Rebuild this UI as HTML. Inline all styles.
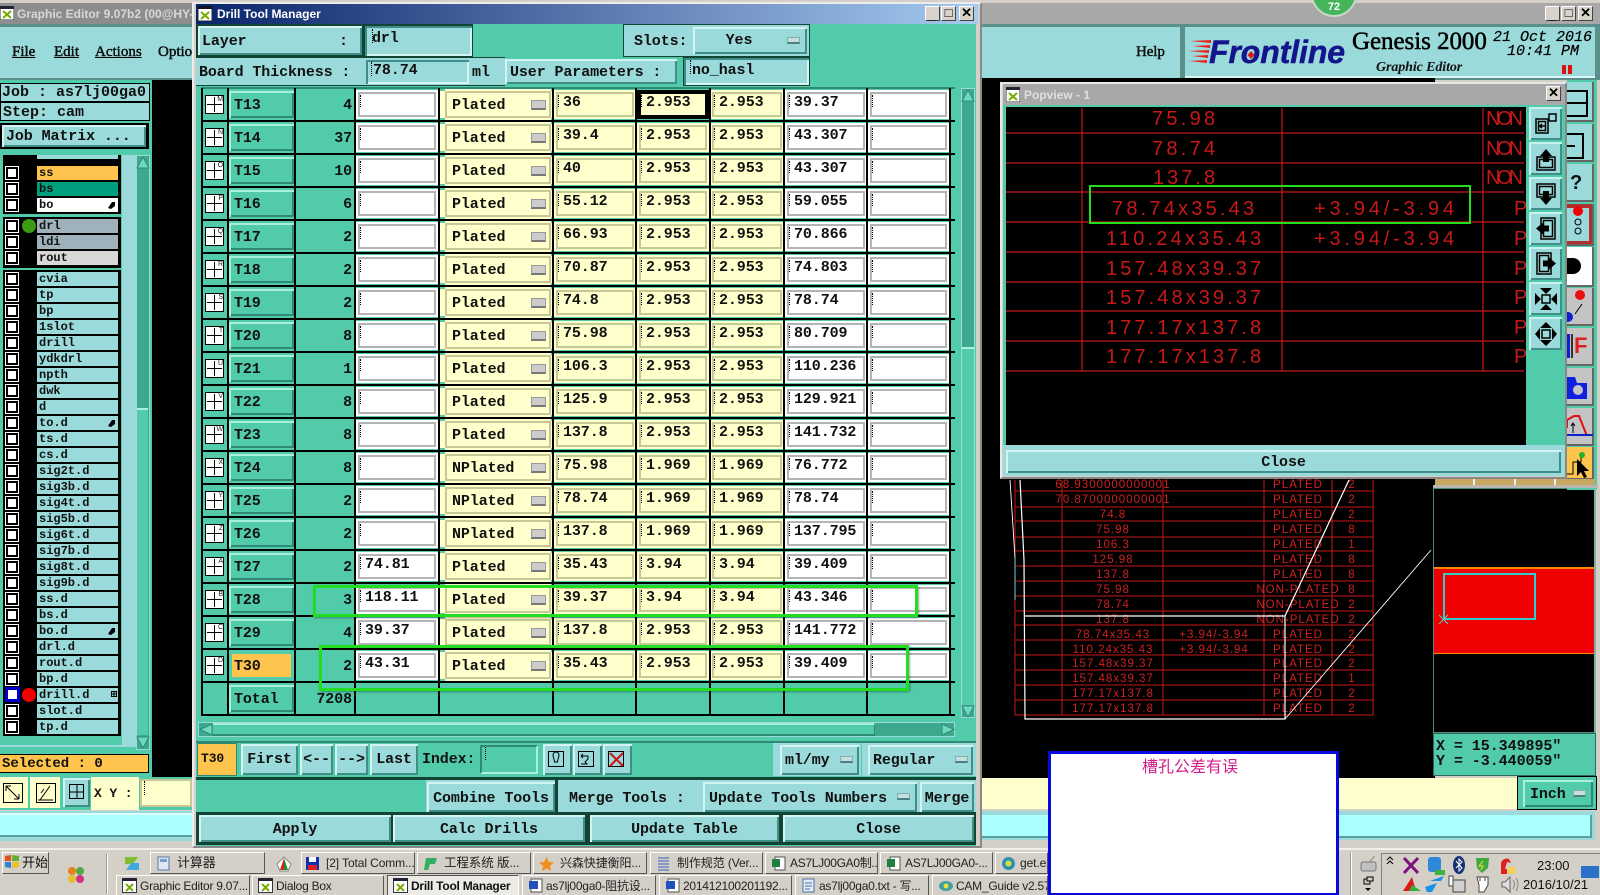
<!DOCTYPE html>
<html><head><meta charset="utf-8"><title>Drill Tool Manager</title>
<style>
html,body{margin:0;padding:0;width:1600px;height:895px;overflow:hidden;background:#d4d0c8}
body *{position:absolute;box-sizing:border-box;white-space:nowrap}
body{font:bold 15px "Liberation Mono","Noto Sans CJK SC",monospace;color:#111;letter-spacing:-.1px}
svg text{white-space:pre}
.bv{background:#9bdada;box-shadow:inset 2px 2px 0 #d4f3f3,inset -2px -2px 0 #3f8f88;text-align:center}
.bt{background:#52cbaa;box-shadow:inset 2px 2px 0 #a8f0dc,inset -2px -2px 0 #2e8a74}
.r{left:0;width:980px;height:33px}
.pl{left:205px;top:7px;width:19px;height:19px;background:#fff;border:1px solid #000;font:7px/7px "Liberation Sans",sans-serif;text-align:right;color:#222;padding-right:0}
.pl::before{content:"";position:absolute;left:1px;top:8px;width:15px;height:1px;background:#000}
.pl::after{content:"";position:absolute;left:8px;top:1px;width:1px;height:15px;background:#000}
.tb{left:229px;top:3px;width:65px;height:27px;padding-left:5px;line-height:30px}
.tb.or{background:#ffc44d;box-shadow:none;left:232px;width:59px;top:5px;height:23px;line-height:26px;padding-left:2px}
.ct{left:296px;width:56px;top:0;line-height:35px;text-align:right}
.f{top:4px;height:25px;border:2px solid;outline:2px solid;line-height:17px;padding-left:5px}
.f::before{content:"";position:absolute;left:0;top:1px;height:12px;border-left:1px dotted #000}
.w{background:#fff;border-color:#b4b4b4;outline-color:#fff}
.y{background:#ffffcc;border-color:#c8c896;outline-color:#ffffcc}
.c4{left:358px;width:78px}.c6{left:556px;width:78px}.c7{left:639px;width:68px}.c8{left:712px;width:70px}.c9{left:787px;width:78px}.c10{left:870px;width:77px}
.pb{left:445px;top:3px;width:106px;height:27px;background:#ffffcc;border:2px solid #c8c896;box-shadow:-6px 0 0 #ffffcc,0 -3px 0 #ffffcc,0 3px 0 #ffffcc,2px 0 0 #ffffcc;padding-left:5px;line-height:25px}
.pb::after{content:"";position:absolute;left:84px;top:7px;width:13px;height:7px;background:#ccc;border:1px solid #999;border-bottom:2px solid #777}
.h{left:201px;width:754px;height:2px;background:#000}
.v{top:88px;width:2px;height:626px;background:#000}
.dd{width:13px;height:7px;background:#c6dede;border:1px solid #7fb0b0;border-bottom:2px solid #4c7f7f}
.ll{left:37px;width:81px;height:14px;background:#9bdada;font-size:12px;line-height:15px;padding-left:2px;letter-spacing:0}
.ck{left:6px;width:12px;height:12px;background:#fff;border:2px solid #000;outline:1px solid #fff}
.mn{top:44px;font:15px "Liberation Serif",serif;-webkit-text-stroke:.4px #000;letter-spacing:0;text-decoration:underline;text-decoration-thickness:1px}
.win{background:#d8d4cc;border:1px solid #fff;border-right-color:#444;border-bottom-color:#444;width:15px;height:15px;font:bold 13px/12px "Liberation Sans",sans-serif;text-align:center;color:#000}
.tk{height:22px;background:#d4d0c8;border:1px solid #fff;border-right-color:#555;border-bottom-color:#555;font:12px/20px "Liberation Sans","Noto Sans CJK SC",sans-serif;color:#222;padding-left:26px;letter-spacing:-.1px;font-weight:normal;overflow:hidden}
.t2{top:875px;height:20px;padding-left:23px;line-height:21px;border-bottom:0;letter-spacing:-.25px}
.ti{left:5px;top:3px;width:15px;height:15px}
.t2 .ti{top:2px}
.pt{left:1529px;width:33px;height:33px;background:#9bdada;box-shadow:inset 2px 2px 0 #c8f0ee,inset -2px -2px 0 #3f8f88}
.rt{left:1567px;width:27px;background:#c4c4c4;box-shadow:inset -2px -2px 0 #666}
</style></head><body>

<!-- back window -->
<div style="left:0;top:0;width:1600px;height:848px;background:#d4d0c8"></div>
<div style="left:0;top:3px;width:1600px;height:21px;background:#a8a8a8"></div>
<div style="left:0;top:3px;width:192px;height:21px;background:#8d8d8d"></div>
<svg style="left:0;top:6px" width="14" height="14"><rect width="14" height="14" fill="#fff" stroke="#333"/><rect width="14" height="3" fill="#223"/><path d="M3 5l8 7M11 5l-8 7" stroke="#7a0" stroke-width="2"/></svg>
<div style="left:17px;top:5px;font:bold 12px/18px 'Liberation Sans',sans-serif;color:#d8d8d8;letter-spacing:0">Graphic Editor 9.07b2 (00@HY-I</div>
<div style="left:0;top:24px;width:1600px;height:56px;background:#5a8f8a"></div>
<div style="left:0;top:27px;width:192px;height:51px;background:#9bdada"></div>
<div class="mn" style="left:12px">File</div><div class="mn" style="left:54px">Edit</div><div class="mn" style="left:95px">Actions</div><div class="mn" style="left:158px;width:34px;overflow:hidden;text-decoration:none">Optio</div>
<div style="left:980px;top:27px;width:200px;height:51px;background:#9bdada"></div>
<div style="left:1136px;top:42px;font:15px/20px 'Liberation Serif',serif;-webkit-text-stroke:.4px #000">Help</div>
<div style="left:1185px;top:27px;width:410px;height:51px;background:#9bdada;border-bottom:2px solid #d8f6f6"></div>
<svg style="left:1188px;top:38px" width="30" height="28"><path d="M2 3L23 2V5zM5 8L22 7V10zM1 13L21 12V15zM4 18L20 17V20zM1 23L19 22V25z" fill="#ee2020"/></svg>
<div style="left:1209px;top:30px;font:italic bold 32px/44px 'Liberation Sans',sans-serif;color:#14148c;letter-spacing:-.1px;-webkit-text-stroke:.5px #14148c">Frontline</div>
<svg style="left:1243px;top:47px" width="16" height="16"><path d="M8 4l3.500 4-3.500 4-3.500-4z" fill="#e01818"/></svg>
<div style="left:1352px;top:26px;font:25px/32px 'Liberation Serif',serif;-webkit-text-stroke:.5px #000;color:#000;letter-spacing:-.05px">Genesis 2000</div>
<div style="left:1376px;top:59px;font:italic bold 14px/18px 'Liberation Serif',serif;color:#111">Graphic Editor</div>
<div style="left:1493px;top:29px;font:italic 15px/18px 'Liberation Mono',monospace;color:#000;-webkit-text-stroke:.2px #000;letter-spacing:0">21 Oct 2016</div>
<div style="left:1507px;top:43px;font:italic 15px/18px 'Liberation Mono',monospace;color:#000;-webkit-text-stroke:.2px #000;letter-spacing:0">10:41 PM</div>
<div style="left:1562px;top:65px;width:4px;height:9px;background:#e01010"></div><div style="left:1568px;top:65px;width:4px;height:9px;background:#e01010"></div>
<div class="win" style="left:1545px;top:6px;line-height:16px">_</div><div class="win" style="left:1561px;top:6px;line-height:12px">□</div><div class="win" style="left:1578px;top:6px">✕</div>
<div style="left:1311px;top:-29px;width:46px;height:46px;border-radius:50%;background:#46b45a;border:2px solid #c8d8c8;color:#fff;font:bold 11px/12px 'Liberation Sans',sans-serif;text-align:center;padding-top:28px;letter-spacing:0">72</div>

<!-- left panel -->
<div style="left:0;top:80px;width:152px;height:697px;background:#52cbaa"></div>
<div style="left:152px;top:80px;width:40px;height:697px;background:#000"></div>
<div style="left:0;top:83px;width:150px;height:38px;background:#000"></div>
<div style="left:1px;top:84px;width:148px;height:17px;background:#9bdada;line-height:17px;padding-left:1px;letter-spacing:0">Job : as7lj00ga0</div>
<div style="left:1px;top:103px;width:148px;height:17px;background:#9bdada;line-height:19px;padding-left:2px;letter-spacing:0">Step: cam</div>
<div style="left:0;top:123px;width:149px;height:26px;background:#000"></div>
<div class="bv" style="left:2px;top:125px;width:144px;height:22px;line-height:23px;text-align:left;padding-left:4px">Job Matrix ...</div>
<!-- layer list -->
<div style="left:0;top:155px;width:125px;height:592px;background:#9bdada"></div>
<div style="left:0;top:155px;width:122px;height:590px;background:#52cbaa"></div>
<div style="left:3px;top:155px;width:118px;height:59px;background:#000"></div>
<div style="left:3px;top:217px;width:118px;height:51px;background:#000"></div>
<div style="left:3px;top:270px;width:118px;height:466px;background:#000"></div>
<div class="ll" style="top:155px;height:4px"></div>
<div class="ck" style="top:167px"></div><div class="ll" style="top:166px;background:#ffc44d">ss</div>
<div class="ck" style="top:183px"></div><div class="ll" style="top:182px;background:#00a07e">bs</div>
<div class="ck" style="top:199px"></div><div class="ll" style="top:198px;background:#fff">bo<svg style="left:71px;top:3px" width="8" height="8"><path d="M0 7L4 1H7V5L3 8z" fill="#000"/></svg></div>
<div class="ck" style="top:220px"></div><div style="left:22px;top:219px;width:14px;height:14px;border-radius:50%;background:#3c9a14"></div><div class="ll" style="top:219px;background:#9fb2bb">drl</div>
<div class="ck" style="top:236px"></div><div class="ll" style="top:235px;background:#9fb2bb">ldi</div>
<div class="ck" style="top:252px"></div><div class="ll" style="top:251px;background:#d8d8d8">rout</div>
<div class="ck" style="top:273px"></div><div class="ll" style="top:272px">cvia</div>
<div class="ck" style="top:289px"></div><div class="ll" style="top:288px">tp</div>
<div class="ck" style="top:305px"></div><div class="ll" style="top:304px">bp</div>
<div class="ck" style="top:321px"></div><div class="ll" style="top:320px">1slot</div>
<div class="ck" style="top:337px"></div><div class="ll" style="top:336px">drill</div>
<div class="ck" style="top:353px"></div><div class="ll" style="top:352px">ydkdrl</div>
<div class="ck" style="top:369px"></div><div class="ll" style="top:368px">npth</div>
<div class="ck" style="top:385px"></div><div class="ll" style="top:384px">dwk</div>
<div class="ck" style="top:401px"></div><div class="ll" style="top:400px">d</div>
<div class="ck" style="top:417px"></div><div class="ll" style="top:416px">to.d<svg style="left:71px;top:3px" width="8" height="8"><path d="M0 7L4 1H7V5L3 8z" fill="#000"/></svg></div>
<div class="ck" style="top:433px"></div><div class="ll" style="top:432px">ts.d</div>
<div class="ck" style="top:449px"></div><div class="ll" style="top:448px">cs.d</div>
<div class="ck" style="top:465px"></div><div class="ll" style="top:464px">sig2t.d</div>
<div class="ck" style="top:481px"></div><div class="ll" style="top:480px">sig3b.d</div>
<div class="ck" style="top:497px"></div><div class="ll" style="top:496px">sig4t.d</div>
<div class="ck" style="top:513px"></div><div class="ll" style="top:512px">sig5b.d</div>
<div class="ck" style="top:529px"></div><div class="ll" style="top:528px">sig6t.d</div>
<div class="ck" style="top:545px"></div><div class="ll" style="top:544px">sig7b.d</div>
<div class="ck" style="top:561px"></div><div class="ll" style="top:560px">sig8t.d</div>
<div class="ck" style="top:577px"></div><div class="ll" style="top:576px">sig9b.d</div>
<div class="ck" style="top:593px"></div><div class="ll" style="top:592px">ss.d</div>
<div class="ck" style="top:609px"></div><div class="ll" style="top:608px">bs.d</div>
<div class="ck" style="top:625px"></div><div class="ll" style="top:624px">bo.d<svg style="left:71px;top:3px" width="8" height="8"><path d="M0 7L4 1H7V5L3 8z" fill="#000"/></svg></div>
<div class="ck" style="top:641px"></div><div class="ll" style="top:640px">drl.d</div>
<div class="ck" style="top:657px"></div><div class="ll" style="top:656px">rout.d</div>
<div class="ck" style="top:673px"></div><div class="ll" style="top:672px">bp.d</div>
<div style="left:5px;top:687px;width:15px;height:15px;background:#0000c8"></div>
<div style="left:8px;top:690px;width:9px;height:9px;background:#fff"></div>
<div style="left:22px;top:688px;width:14px;height:14px;border-radius:50%;background:#f00000"></div><div class="ll" style="top:688px">drill.d<svg style="left:74px;top:3px" width="6" height="7"><path d="M.5.5h5v5h-5zM3 0v6M0 3h6" stroke="#000" fill="none"/></svg></div>
<div class="ck" style="top:705px"></div><div class="ll" style="top:704px">slot.d</div>
<div class="ck" style="top:721px"></div><div class="ll" style="top:720px">tp.d</div>
<div style="left:125px;top:155px;width:11px;height:592px;background:#9bdada"></div>
<div style="left:136px;top:155px;width:14px;height:595px;background:#3ea88f;border:1px solid #9bdada"></div>
<div style="left:137px;top:408px;width:11px;height:327px;background:#52cbaa;border-top:2px solid #a8f0dc"></div>
<svg style="left:136px;top:156px" width="14" height="13"><path d="M7 1L13 12H1z" fill="#6fd8c0" stroke="#2e8a74"/></svg>
<svg style="left:136px;top:736px" width="14" height="13"><path d="M7 12L13 1H1z" fill="#6fd8c0" stroke="#2e8a74"/></svg>
<div style="left:0;top:754px;width:149px;height:19px;background:#ffc44d;border:1px solid #000;border-left:0;line-height:19px;padding-left:2px;letter-spacing:0;font-size:14px">Selected : 0</div>

<!-- left bottom tools -->
<div style="left:0;top:777px;width:192px;height:33px;background:#52cbaa"></div>
<div style="left:0;top:777px;width:28px;height:31px;background:#ffffcc"></div>
<div style="left:30px;top:777px;width:30px;height:31px;background:#ffffcc"></div>
<div class="bv" style="left:63px;top:778px;width:27px;height:29px;background:#9bdada"></div>
<svg style="left:3px;top:783px" width="85" height="20"><rect x=".5" y=".5" width="19" height="19" fill="none" stroke="#000"/><path d="M3 3L16 16M3 3v5M3 3h5M16 16h-5M16 16v-5" stroke="#000" fill="none"/><rect x="33.5" y=".5" width="19" height="19" fill="none" stroke="#000"/><path d="M35 17H50M37 17L47 3M41 6L38 10" stroke="#000" fill="none"/><rect x="65.5" y=".5" width="14" height="14" transform="translate(1 1)" fill="none" stroke="#000"/><path d="M67 9H81M74 2V16" stroke="#000"/></svg>
<div style="left:91px;top:777px;width:48px;height:33px;background:#ffffcc;line-height:33px;padding-left:3px;font-size:13px">X Y :</div>
<div style="left:140px;top:779px;width:52px;height:28px;background:#ffffcc;border:2px solid #c8c896"></div>
<div style="left:144px;top:781px;height:14px;border-left:1px dotted #000"></div>

<!-- right graphics area -->
<div style="left:980px;top:78px;width:455px;height:700px;background:#000"></div>
<div style="left:1433px;top:488px;width:163px;height:245px;background:#000;border:1px solid #4a8a78;border-right:2px solid #7fb0a8"></div>
<div style="left:1434px;top:567px;width:160px;height:87px;background:#f00000;border-top:2px solid #ff8a00;border-bottom:1px solid #ff8a00"></div>
<div style="left:1443px;top:573px;width:93px;height:47px;border:2px solid #33cccc"></div>
<svg style="left:1438px;top:614px" width="12" height="12"><path d="M1 1l9 9M10 1l-9 9" stroke="#55cccc"/></svg>
<div style="left:1433px;top:733px;width:163px;height:43px;background:#52cbaa;border:1px solid #2e6a5a;font-size:14.5px;letter-spacing:0;"></div>
<div style="left:1436px;top:739px;font-size:15px;line-height:15px;letter-spacing:-.05px">X = 15.349895"</div>
<div style="left:1436px;top:754px;font-size:15px;line-height:15px;letter-spacing:-.05px">Y = -3.440059"</div>
<div style="left:980px;top:778px;width:537px;height:31px;background:#ffffcc"></div>
<div style="left:980px;top:809px;width:620px;height:39px;background:#d4d0c8"></div>
<div style="left:1517px;top:776px;width:80px;height:34px;background:#52cbaa;border:1px solid #000"></div>
<div class="bt" style="left:1523px;top:780px;width:70px;height:27px;padding-left:7px;line-height:30px">Inch</div>
<div class="dd" style="left:1573px;top:790px"></div>
<div style="left:0;top:811px;width:192px;height:30px;background:#9bdada"></div>
<div style="left:0;top:815px;width:192px;height:22px;background:#aaffff;border-bottom:2px solid #5a9f9f;box-shadow:0 -2px 0 #d8ffff"></div>
<div style="left:980px;top:811px;width:615px;height:29px;background:#9bdada"></div>
<div style="left:980px;top:815px;width:612px;height:23px;background:#aaffff;border-bottom:2px solid #5a9f9f;border-right:2px solid #5a9f9f"></div>

<!-- lower red table -->
<svg style="left:1000px;top:478px;font-weight:normal" width="435" height="250" font-family="Liberation Sans" font-size="11.5" fill="#d02020" text-anchor="middle">
<g transform="translate(-1000 -478)">
<path d="M1015 480V715M1062 480V715M1163 480V715M1264 480V715M1332 480V715M1373 480V715M1015 491H1373M1015 507H1373M1015 521H1373M1015 537H1373M1015 551H1373M1015 566H1373M1015 581H1373M1015 596H1373M1015 611H1373M1015 625H1373M1015 640H1373M1015 655H1373M1015 670H1373M1015 685H1373M1015 700H1373M1015 715H1373" stroke="#c81818" stroke-width="1" fill="none"/>
<g letter-spacing="1">
<text x="1113" y="488">68.9300000000001</text><text x="1298" y="488">PLATED</text><text x="1352" y="488">2</text>
<text x="1113" y="503">70.8700000000001</text><text x="1298" y="503">PLATED</text><text x="1352" y="503">2</text>
<text x="1113" y="518">74.8</text><text x="1298" y="518">PLATED</text><text x="1352" y="518">2</text>
<text x="1113" y="533">75.98</text><text x="1298" y="533">PLATED</text><text x="1352" y="533">8</text>
<text x="1113" y="548">106.3</text><text x="1298" y="548">PLATED</text><text x="1352" y="548">1</text>
<text x="1113" y="563">125.98</text><text x="1298" y="563">PLATED</text><text x="1352" y="563">8</text>
<text x="1113" y="578">137.8</text><text x="1298" y="578">PLATED</text><text x="1352" y="578">8</text>
<text x="1113" y="593">75.98</text><text x="1298" y="593">NON-PLATED</text><text x="1352" y="593">8</text>
<text x="1113" y="608">78.74</text><text x="1298" y="608">NON-PLATED</text><text x="1352" y="608">2</text>
<text x="1113" y="623">137.8</text><text x="1298" y="623">NON-PLATED</text><text x="1352" y="623">2</text>
<text x="1113" y="638">78.74x35.43</text><text x="1214" y="638">+3.94/-3.94</text><text x="1298" y="638">PLATED</text><text x="1352" y="638">2</text>
<text x="1113" y="653">110.24x35.43</text><text x="1214" y="653">+3.94/-3.94</text><text x="1298" y="653">PLATED</text><text x="1352" y="653">2</text>
<text x="1113" y="667">157.48x39.37</text><text x="1298" y="667">PLATED</text><text x="1352" y="667">2</text>
<text x="1113" y="682">157.48x39.37</text><text x="1298" y="682">PLATED</text><text x="1352" y="682">1</text>
<text x="1113" y="697">177.17x137.8</text><text x="1298" y="697">PLATED</text><text x="1352" y="697">2</text>
<text x="1113" y="712">177.17x137.8</text><text x="1298" y="712">PLATED</text><text x="1352" y="712">2</text>
</g>
<path d="M1020 480L1024 560L1025 719H1285V616H1025M1285 616L1349 480" stroke="#fff" fill="none" stroke-width="1.2"/>
<path d="M1285 719L1431 550M1010 480L1015 558" stroke="#fff" fill="none" stroke-width=".9"/>
<path d="M1015 558V600" stroke="#66dddd"/>
</g></svg>

<!-- Main dialog -->
<div style="left:192px;top:2px;width:790px;height:846px;background:#d4d0c8;border:2px solid #ececec;border-right-color:#888;border-bottom-color:#888"></div>
<div style="left:196px;top:4px;width:782px;height:20px;background:linear-gradient(90deg,#0a246a,#a6caf0)"></div>
<svg style="left:198px;top:6px" width="14" height="15"><rect width="14" height="15" fill="#fff" stroke="#333"/><rect width="14" height="3" fill="#112"/><path d="M3 6l8 7M11 6l-8 7" stroke="#7a0" stroke-width="2"/></svg>
<div style="left:217px;top:5px;font:bold 12px/18px 'Liberation Sans',sans-serif;color:#fff;letter-spacing:0">Drill Tool Manager</div>
<div class="win" style="left:925px;top:6px;line-height:16px">_</div><div class="win" style="left:941px;top:6px;line-height:12px">□</div><div class="win" style="left:959px;top:6px">✕</div>
<div style="left:196px;top:24px;width:780px;height:822px;background:#52cbaa"></div>

<!-- header -->
<div style="left:196px;top:24px;width:277px;height:33px;background:#143;"></div>
<div class="bv" style="left:198px;top:26px;width:164px;height:29px;line-height:32px;text-align:left;padding-left:4px">Layer<span style="left:141px">:</span></div>
<div class="bv" style="left:365px;top:26px;width:107px;height:30px;background:#9bdada;box-shadow:inset 2px 2px 0 #3f8f88,inset -2px -2px 0 #d4f3f3;text-align:left;padding-left:7px;line-height:26px">drl</div>
<div style="left:372px;top:29px;height:14px;border-left:1px dotted #000"></div>
<div style="left:623px;top:24px;width:187px;height:33px;background:#9bdada;border:1px solid #143;line-height:33px;padding-left:10px">Slots:</div>
<div class="bv" style="left:693px;top:27px;width:114px;height:27px;line-height:28px;padding-right:22px">Yes</div>
<div class="dd" style="left:787px;top:37px"></div>
<div style="left:196px;top:57px;width:309px;height:29px;background:#9bdada;border-top:1px solid #143;border-bottom:1px solid #143;line-height:29px;padding-left:3px">Board Thickness :</div>
<div style="left:366px;top:60px;width:103px;height:24px;background:#9bdada;box-shadow:inset 2px 2px 0 #3f8f88,inset -2px -2px 0 #d4f3f3;padding-left:7px;line-height:21px">78.74</div>
<div style="left:371px;top:62px;height:14px;border-left:1px dotted #000"></div>
<div style="left:472px;top:61px;line-height:24px">ml</div>
<div class="bv" style="left:505px;top:59px;width:172px;height:25px;line-height:27px;text-align:left;padding-left:5px">User Parameters :</div>
<div style="left:683px;top:57px;width:127px;height:29px;background:#9bdada;border:1px solid #143;box-shadow:inset 2px 2px 0 #3f8f88,inset -2px -2px 0 #d4f3f3;padding-left:8px;line-height:26px">no_hasl</div>
<div style="left:690px;top:60px;height:14px;border-left:1px dotted #000"></div>

<!-- table -->
<div class="r" style="top:88px"><div class="pl">M</div><div class="tb bt">T13</div><div class="ct">4</div><div class="f w c4"></div><div class="pb">Plated</div><div class="f y c6">36</div><div class="f y c7" style="border-color:#000;outline-color:#000">2.953</div><div class="f y c8">2.953</div><div class="f w c9">39.37</div><div class="f w c10"></div></div>
<div class="r" style="top:121px"><div class="pl">N</div><div class="tb bt">T14</div><div class="ct">37</div><div class="f w c4"></div><div class="pb">Plated</div><div class="f y c6">39.4</div><div class="f y c7">2.953</div><div class="f y c8">2.953</div><div class="f w c9">43.307</div><div class="f w c10"></div></div>
<div class="r" style="top:154px"><div class="pl">O</div><div class="tb bt">T15</div><div class="ct">10</div><div class="f w c4"></div><div class="pb">Plated</div><div class="f y c6">40</div><div class="f y c7">2.953</div><div class="f y c8">2.953</div><div class="f w c9">43.307</div><div class="f w c10"></div></div>
<div class="r" style="top:187px"><div class="pl">P</div><div class="tb bt">T16</div><div class="ct">6</div><div class="f w c4"></div><div class="pb">Plated</div><div class="f y c6">55.12</div><div class="f y c7">2.953</div><div class="f y c8">2.953</div><div class="f w c9">59.055</div><div class="f w c10"></div></div>
<div class="r" style="top:220px"><div class="pl">Q</div><div class="tb bt">T17</div><div class="ct">2</div><div class="f w c4"></div><div class="pb">Plated</div><div class="f y c6">66.93</div><div class="f y c7">2.953</div><div class="f y c8">2.953</div><div class="f w c9">70.866</div><div class="f w c10"></div></div>
<div class="r" style="top:253px"><div class="pl">R</div><div class="tb bt">T18</div><div class="ct">2</div><div class="f w c4"></div><div class="pb">Plated</div><div class="f y c6">70.87</div><div class="f y c7">2.953</div><div class="f y c8">2.953</div><div class="f w c9">74.803</div><div class="f w c10"></div></div>
<div class="r" style="top:286px"><div class="pl">S</div><div class="tb bt">T19</div><div class="ct">2</div><div class="f w c4"></div><div class="pb">Plated</div><div class="f y c6">74.8</div><div class="f y c7">2.953</div><div class="f y c8">2.953</div><div class="f w c9">78.74</div><div class="f w c10"></div></div>
<div class="r" style="top:319px"><div class="pl">T</div><div class="tb bt">T20</div><div class="ct">8</div><div class="f w c4"></div><div class="pb">Plated</div><div class="f y c6">75.98</div><div class="f y c7">2.953</div><div class="f y c8">2.953</div><div class="f w c9">80.709</div><div class="f w c10"></div></div>
<div class="r" style="top:352px"><div class="pl">U</div><div class="tb bt">T21</div><div class="ct">1</div><div class="f w c4"></div><div class="pb">Plated</div><div class="f y c6">106.3</div><div class="f y c7">2.953</div><div class="f y c8">2.953</div><div class="f w c9">110.236</div><div class="f w c10"></div></div>
<div class="r" style="top:385px"><div class="pl">V</div><div class="tb bt">T22</div><div class="ct">8</div><div class="f w c4"></div><div class="pb">Plated</div><div class="f y c6">125.9</div><div class="f y c7">2.953</div><div class="f y c8">2.953</div><div class="f w c9">129.921</div><div class="f w c10"></div></div>
<div class="r" style="top:418px"><div class="pl">W</div><div class="tb bt">T23</div><div class="ct">8</div><div class="f w c4"></div><div class="pb">Plated</div><div class="f y c6">137.8</div><div class="f y c7">2.953</div><div class="f y c8">2.953</div><div class="f w c9">141.732</div><div class="f w c10"></div></div>
<div class="r" style="top:451px"><div class="pl">X</div><div class="tb bt">T24</div><div class="ct">8</div><div class="f w c4"></div><div class="pb">NPlated</div><div class="f y c6">75.98</div><div class="f y c7">1.969</div><div class="f y c8">1.969</div><div class="f w c9">76.772</div><div class="f w c10"></div></div>
<div class="r" style="top:484px"><div class="pl">Y</div><div class="tb bt">T25</div><div class="ct">2</div><div class="f w c4"></div><div class="pb">NPlated</div><div class="f y c6">78.74</div><div class="f y c7">1.969</div><div class="f y c8">1.969</div><div class="f w c9">78.74</div><div class="f w c10"></div></div>
<div class="r" style="top:517px"><div class="pl">Z</div><div class="tb bt">T26</div><div class="ct">2</div><div class="f w c4"></div><div class="pb">NPlated</div><div class="f y c6">137.8</div><div class="f y c7">1.969</div><div class="f y c8">1.969</div><div class="f w c9">137.795</div><div class="f w c10"></div></div>
<div class="r" style="top:550px"><div class="pl">A</div><div class="tb bt">T27</div><div class="ct">2</div><div class="f w c4">74.81</div><div class="pb">Plated</div><div class="f y c6">35.43</div><div class="f y c7">3.94</div><div class="f y c8">3.94</div><div class="f w c9">39.409</div><div class="f w c10"></div></div>
<div class="r" style="top:583px"><div class="pl">B</div><div class="tb bt">T28</div><div class="ct">3</div><div class="f w c4">118.11</div><div class="pb">Plated</div><div class="f y c6">39.37</div><div class="f y c7">3.94</div><div class="f y c8">3.94</div><div class="f w c9">43.346</div><div class="f w c10"></div></div>
<div class="r" style="top:616px"><div class="pl">C</div><div class="tb bt">T29</div><div class="ct">4</div><div class="f w c4">39.37</div><div class="pb">Plated</div><div class="f y c6">137.8</div><div class="f y c7">2.953</div><div class="f y c8">2.953</div><div class="f w c9">141.772</div><div class="f w c10"></div></div>
<div class="r" style="top:649px"><div class="pl">D</div><div class="tb bt or">T30</div><div class="ct">2</div><div class="f w c4">43.31</div><div class="pb">Plated</div><div class="f y c6">35.43</div><div class="f y c7">2.953</div><div class="f y c8">2.953</div><div class="f w c9">39.409</div><div class="f w c10"></div></div>
<div class="r" style="top:682px"><div class="tb bt">Total</div><div class="ct">7208</div></div>

<!-- grid lines -->
<div class="h" style="top:87px;background:#2e8a74"></div>
<div class="h" style="top:120px"></div><div class="h" style="top:153px"></div><div class="h" style="top:186px"></div><div class="h" style="top:219px"></div><div class="h" style="top:252px"></div><div class="h" style="top:285px"></div><div class="h" style="top:318px"></div><div class="h" style="top:351px"></div><div class="h" style="top:384px"></div><div class="h" style="top:417px"></div><div class="h" style="top:450px"></div><div class="h" style="top:483px"></div><div class="h" style="top:516px"></div><div class="h" style="top:549px"></div><div class="h" style="top:582px"></div><div class="h" style="top:615px"></div><div class="h" style="top:648px"></div><div class="h" style="top:681px"></div><div class="h" style="top:714px"></div>
<div class="v" style="left:201px"></div><div class="v" style="left:227px"></div><div class="v" style="left:294px"></div><div class="v" style="left:354px"></div><div class="v" style="left:438px"></div><div class="v" style="left:552px"></div><div class="v" style="left:635px"></div><div class="v" style="left:709px"></div><div class="v" style="left:783px"></div><div class="v" style="left:866px"></div><div class="v" style="left:949px"></div>

<!-- scrollbars -->
<div style="left:961px;top:88px;width:14px;height:630px;background:#3ea88f;border:1px solid #9bdada"></div>
<div style="left:962px;top:347px;width:12px;height:358px;background:#52cbaa;border-top:2px solid #a8f0dc"></div>
<svg style="left:961px;top:89px" width="14" height="13"><path d="M7 1L13 12H1z" fill="#6fd8c0" stroke="#2e8a74"/></svg>
<svg style="left:961px;top:705px" width="14" height="13"><path d="M7 12L13 1H1z" fill="#6fd8c0" stroke="#2e8a74"/></svg>
<div style="left:198px;top:722px;width:757px;height:15px;background:#3ea88f;border:1px solid #9bdada"></div>
<div style="left:213px;top:723px;width:662px;height:13px;background:#52cbaa;border-top:2px solid #a8f0dc;border-right:1px solid #2e8a74;border-bottom:2px solid #2e8a74"></div>
<svg style="left:199px;top:723px" width="14" height="13"><path d="M1 6.5L13 1V12z" fill="#6fd8c0" stroke="#2e8a74"/></svg>
<svg style="left:941px;top:723px" width="14" height="13"><path d="M13 6.5L1 1V12z" fill="#6fd8c0" stroke="#2e8a74"/></svg>

<!-- green marks -->
<div style="left:313px;top:585px;width:605px;height:32px;border:3px solid #22dd22;box-shadow:1px 1px 2px rgba(0,0,0,.35)"></div>
<div style="left:319px;top:645px;width:590px;height:46px;border:3px solid #22dd22;box-shadow:1px 1px 2px rgba(0,0,0,.35)"></div>

<!-- nav row -->
<div style="left:196px;top:741px;width:780px;height:2px;background:#2e8a74"></div>
<div style="left:197px;top:743px;width:40px;height:33px;background:#ffc44d;border:1px solid #2e8a74;font-size:13px;line-height:30px;padding-left:3px">T30</div>
<div class="bv" style="left:241px;top:744px;width:57px;height:31px;line-height:32px">First</div>
<div class="bv" style="left:300px;top:744px;width:33px;height:31px;line-height:32px">&lt;--</div>
<div class="bv" style="left:335px;top:744px;width:33px;height:31px;line-height:32px">--&gt;</div>
<div class="bv" style="left:370px;top:744px;width:48px;height:31px;line-height:32px">Last</div>
<div style="left:422px;top:744px;line-height:32px">Index:</div>
<div style="left:480px;top:745px;width:58px;height:29px;background:#52cbaa;border:2px solid #a8f0dc;border-top-color:#2e8a74;border-left-color:#2e8a74"></div>
<div style="left:485px;top:747px;height:13px;border-left:1px dotted #000"></div>
<div class="bv" style="left:543px;top:744px;width:29px;height:31px"></div>
<div class="bv" style="left:573px;top:744px;width:29px;height:31px"></div>
<div class="bv" style="left:603px;top:744px;width:29px;height:31px"></div>
<svg style="left:548px;top:751px" width="80" height="18" fill="none" stroke="#000"><rect x=".5" y=".5" width="15" height="15"/><path d="M5 4a3 3 0 0 1 6 0c0 3-1.500 4-1.500 7h-3C6.500 8 5 7 5 4z"/><rect x="30.500" y=".5" width="15" height="15"/><path d="M33 5h7v3l-3 3 2 2h-6M33 5l2-2M33 5l2 2"/><rect x="60.500" y=".5" width="15" height="15"/><path d="M62 2L75 15M75 2L62 15" stroke="#d01010" stroke-width="2"/></svg>
<div style="left:773px;top:743px;width:88px;height:33px;background:#9bdada"></div>
<div class="bv" style="left:780px;top:745px;width:79px;height:30px;line-height:31px;text-align:left;padding-left:5px">ml/my</div>
<div class="dd" style="left:840px;top:756px"></div>
<div style="left:862px;top:743px;width:114px;height:33px;background:#9bdada"></div>
<div class="bv" style="left:868px;top:745px;width:105px;height:30px;line-height:31px;text-align:left;padding-left:5px">Regular</div>
<div class="dd" style="left:955px;top:756px"></div>
<div style="left:196px;top:777px;width:780px;height:3px;background:#143"></div>
<div style="left:426px;top:780px;width:550px;height:33px;background:#9bdada"></div>
<div class="bv" style="left:427px;top:782px;width:128px;height:30px;line-height:33px">Combine Tools</div>
<div style="left:555px;top:780px;width:3px;height:33px;background:#143"></div>
<div style="left:569px;top:782px;line-height:34px">Merge Tools :</div>
<div class="bv" style="left:703px;top:782px;width:214px;height:30px;line-height:33px;text-align:left;padding-left:6px">Update Tools Numbers</div>
<div class="dd" style="left:897px;top:793px"></div>
<div class="bv" style="left:920px;top:782px;width:54px;height:30px;line-height:33px">Merge</div>
<div style="left:196px;top:812px;width:780px;height:33px;background:#143"></div>
<div class="bv" style="left:199px;top:815px;width:192px;height:27px;line-height:30px">Apply</div>
<div class="bv" style="left:393px;top:815px;width:192px;height:27px;line-height:30px">Calc Drills</div>
<div class="bv" style="left:590px;top:815px;width:189px;height:27px;line-height:30px">Update Table</div>
<div class="bv" style="left:783px;top:815px;width:191px;height:27px;line-height:30px">Close</div>

<!-- right toolbar behind popview -->
<div style="left:1567px;top:80px;width:30px;height:410px;background:#52cbaa"></div>
<div class="rt" style="top:82px;height:40px;background:#9bdada"></div>
<div class="rt" style="top:124px;height:38px;background:#9bdada"></div>
<div class="rt" style="top:164px;height:38px;background:#9bdada;font:bold 20px/38px 'Liberation Sans',sans-serif;padding-left:3px">?</div>
<div class="rt" style="top:204px;height:42px;background:#b03030"></div>
<div style="left:1567px;top:208px;width:22px;height:33px;background:#9bdada"></div>
<svg style="left:1567px;top:88px" width="26" height="150" fill="none" stroke="#000" stroke-width="2"><path d="M0 3H20V28H0M0 15H20"/><path d="M0 46H16V70H0M0 58H8"/><circle cx="11" cy="123" r="5" fill="#f00000" stroke="none"/><circle cx="11" cy="134" r="3" stroke-width="1"/><circle cx="11" cy="143" r="3" stroke-width="1"/></svg>
<div class="rt" style="top:247px;height:40px;background:#fff"></div>
<div style="left:1567px;top:258px;width:14px;height:16px;border-radius:0 9px 9px 0;background:#000"></div>
<div class="rt" style="top:288px;height:38px"></div>
<div style="left:1575px;top:290px;width:10px;height:10px;border-radius:50%;background:#e81010"></div>
<div style="left:1567px;top:312px;width:6px;height:10px;background:#1020d0;border-radius:0 5px 5px 0"></div>
<svg style="left:1567px;top:296px" width="16" height="22"><path d="M8 18L15 8" stroke="#000"/></svg>
<div class="rt" style="top:328px;height:38px"></div>
<div style="left:1567px;top:334px;width:3px;height:24px;background:#1020d0"></div>
<div style="left:1571px;top:334px;width:2px;height:24px;background:#333"></div>
<div style="left:1574px;top:333px;font:bold 22px/26px 'Liberation Sans',sans-serif;color:#e02020">F</div>
<div class="rt" style="top:368px;height:38px"></div>
<svg style="left:1567px;top:375px" width="24" height="26"><path d="M0 2H8L10 8H20V24H0z" fill="#1020e0"/><circle cx="11" cy="15" r="5" fill="#c4c4c4"/></svg>
<div class="rt" style="top:408px;height:38px"></div>
<svg style="left:1567px;top:412px" width="26" height="30" fill="none"><path d="M0 16V8L7 4H12L20 24" stroke="#e01010" stroke-width="2"/><path d="M0 23H26" stroke="#1020d0" stroke-width="2"/><path d="M6 21V12M4 14l2-3 2 3" stroke="#000"/></svg>
<div class="rt" style="top:447px;height:33px;background:#ffc44d"></div>
<svg style="left:1567px;top:450px" width="26" height="30"><path d="M0 24H6V12H14V5" stroke="#000" fill="none"/><circle cx="15" cy="5" r="3" fill="#2cb02c"/><path d="M10 9V26L14 22L17 28L20 27L17 21H22z" fill="#000"/></svg>
<div style="left:1435px;top:479px;width:160px;height:6px;background:#c8a860"></div>
<div style="left:1473px;top:479px;width:2px;height:6px;background:#eee"></div><div style="left:1514px;top:479px;width:2px;height:6px;background:#eee"></div><div style="left:1554px;top:479px;width:2px;height:6px;background:#eee"></div>
<div style="left:1433px;top:485px;width:165px;height:3px;background:#b8b8b0"></div>

<!-- Popview -->
<div style="left:1000px;top:82px;width:567px;height:397px;background:#d4d0c8;border:2px solid #e8e8e8;border-right-color:#888;border-bottom-color:#888"></div>
<div style="left:1003px;top:84px;width:562px;height:21px;background:#a8a8a8"></div>
<svg style="left:1006px;top:87px" width="14" height="15"><rect width="14" height="15" fill="#fff" stroke="#333"/><rect width="14" height="3" fill="#223"/><path d="M3 6l8 7M11 6l-8 7" stroke="#7a0" stroke-width="2"/></svg>
<div style="left:1024px;top:86px;font:bold 12px/18px 'Liberation Sans',sans-serif;color:#e0e0e0;letter-spacing:0">Popview - 1</div>
<div class="win" style="left:1546px;top:86px">✕</div>
<div style="left:1003px;top:105px;width:562px;height:371px;background:#52cbaa"></div>
<div style="left:1003px;top:445px;width:562px;height:31px;background:#9bdada"></div>
<svg style="left:1006px;top:107px;font-weight:normal" width="520" height="338" font-family="Liberation Sans" font-size="20" fill="#c81818">
<rect width="520" height="338" fill="#000"/>
<g transform="translate(-1006 -107)">
<path d="M1082 108V371M1282 108V371M1483 108V371M1006 133H1524M1006 163H1524M1006 192H1524M1006 222H1524M1006 252H1524M1006 282H1524M1006 311H1524M1006 341H1524M1006 371H1524" stroke="#c81818" stroke-width="1.200" fill="none"/>
<text x="1152" y="125" textLength="63">75.98</text><text x="1486" y="125" textLength="37">NON</text>
<text x="1152" y="155" textLength="63">78.74</text><text x="1486" y="155" textLength="37">NON</text>
<text x="1153" y="184" textLength="62">137.8</text><text x="1486" y="184" textLength="37">NON</text>
<text x="1112" y="215" textLength="142">78.74x35.43</text><text x="1314" y="215" textLength="140">+3.94/-3.94</text><text x="1514" y="215">P</text>
<text x="1106" y="245" textLength="155">110.24x35.43</text><text x="1314" y="245" textLength="140">+3.94/-3.94</text><text x="1514" y="245">P</text>
<text x="1106" y="275" textLength="155">157.48x39.37</text><text x="1514" y="275">P</text>
<text x="1106" y="304" textLength="155">157.48x39.37</text><text x="1514" y="304">P</text>
<text x="1106" y="334" textLength="155">177.17x137.8</text><text x="1514" y="334">P</text>
<text x="1106" y="363" textLength="155">177.17x137.8</text><text x="1514" y="363">P</text>
</g></svg>
<div style="left:1089px;top:185px;width:382px;height:39px;border:2px solid #1ee01e"></div>
<div class="bv" style="left:1006px;top:450px;width:555px;height:23px;line-height:26px">Close</div>
<div class="pt" style="top:107px"></div><div class="pt" style="top:142px"></div><div class="pt" style="top:177px"></div><div class="pt" style="top:212px"></div><div class="pt" style="top:247px"></div><div class="pt" style="top:282px"></div><div class="pt" style="top:317px"></div>
<svg style="left:1534px;top:112px" width="24" height="238" fill="none" stroke="#000" stroke-width="1.500">
<path d="M2 7H14V21H2zM4.500 9.500H11.500V18.500H4.500zM15 2H22V9H15zM11 14H6M8 12L5.500 14L8 16"/>
<path d="M3 45H21V58H3zM5.500 47.500H18.500V55.500H5.500z"/><path d="M12 37L18 44H15V50H9V44H6z" fill="#000" stroke="none"/>
<path d="M3 72H21V85H3zM5.500 74.500H18.500V82.500H5.500z"/><path d="M12 93L18 86H15V79H9V86H6z" fill="#000" stroke="none"/>
<path d="M7 106H21V127H7zM9.500 108.500H18.500V124.500H9.500z"/><path d="M2 116.500L9 110.500V113.500H15V119.500H9V122.500z" fill="#000" stroke="none"/>
<path d="M3 141H17V162H3zM5.500 143.500H14.500V159.500H5.500z"/><path d="M22 151.500L15 145.500V148.500H9V154.500H15V157.500z" fill="#000" stroke="none"/>
<rect x="8" y="183" width="8" height="8"/><path d="M1 181L7 187L1 193zM23 181L17 187L23 193zM6 176H18L12 182zM6 198H18L12 192z" fill="#000" stroke="none"/>
<rect x="8" y="218" width="8" height="8"/><path d="M6 216L12 210L18 216zM6 228L12 234L18 228zM6 216L1 222L6 228zM18 216L23 222L18 228z" fill="#000" stroke="none"/>
</svg>

<!-- note box -->
<div style="left:1048px;top:751px;width:291px;height:144px;background:#fff;border:3px solid #0808e0;border-bottom-width:2px"></div>
<div style="left:1142px;top:758px;width:96px;font:16px/20px 'Liberation Sans','Noto Sans CJK SC',sans-serif;color:#d0208a;letter-spacing:0;font-weight:normal">槽孔公差有误</div>

<!-- taskbar -->
<div style="left:0;top:848px;width:1048px;height:47px;background:#d4d0c8;border-top:2px solid #f0eee8"></div>
<div style="left:1339px;top:848px;width:261px;height:47px;background:#d4d0c8;border-top:2px solid #f0eee8"></div>
<div style="left:2px;top:852px;width:47px;height:22px;background:#d4d0c8;border:1px solid #fff;border-right-color:#555;border-bottom-color:#555;font:13px/20px 'Liberation Sans','Noto Sans CJK SC',sans-serif;color:#111;padding-left:19px;letter-spacing:0;font-weight:normal">开始</div>
<svg style="left:4px;top:854px" width="16" height="16"><path d="M1 2L7 1V7H1z" fill="#e05018"/><path d="M8 1L15 2V7H8z" fill="#60b030"/><path d="M1 8H7V14L1 13z" fill="#3080d8"/><path d="M8 8H15V13L8 14z" fill="#f0c020"/></svg>
<svg style="left:66px;top:866px" width="20" height="18"><circle cx="6" cy="5" r="4" fill="#e88020"/><circle cx="14" cy="5" r="4" fill="#50a840"/><circle cx="6" cy="13" r="4" fill="#e0c030"/><circle cx="14" cy="13" r="4" fill="#d03080"/></svg>
<div style="left:106px;top:854px;width:2px;height:40px;background:#999;border-right:1px solid #fff"></div>
<svg style="left:123px;top:855px" width="18" height="18"><path d="M2 2H15L10 9H2z" fill="#80c030"/><path d="M16 15H3L8 8H16z" fill="#40a8e0"/></svg>
<div class="tk" style="left:150px;top:852px;width:115px;font-size:13px">计算器<svg class="ti" width="15" height="15"><rect x="2" y="1" width="11" height="13" fill="#dde8f4" stroke="#5878a0"/><rect x="4" y="3" width="7" height="3" fill="#70a0d0"/></svg></div>
<svg style="left:275px;top:856px" width="18" height="17"><path d="M9 1L16 8L13 15H5L2 8z" fill="#fff" stroke="#888"/><path d="M9 2L5 14H9z" fill="#d02020"/><path d="M9 2L13 14H9z" fill="#209030"/></svg>
<div class="tk" style="left:301px;top:852px;width:114px;padding-left:24px">[2] Total Comm...<svg class="ti" width="15" height="15" style="left:3px"><rect x="1" y="1" width="13" height="13" fill="#1030b0"/><rect x="4" y="1" width="7" height="5" fill="#fff"/><rect x="3" y="9" width="9" height="5" fill="#d82020"/></svg></div>
<div class="tk" style="left:417px;top:852px;width:114px;font-size:12.500px">工程系统 版...<svg class="ti" width="15" height="15"><path d="M3 2H14L12 8H7L5 14H1z" fill="#30b060"/></svg></div>
<div class="tk" style="left:533px;top:852px;width:114px">兴森快捷衡阳...<svg class="ti" width="15" height="15"><path d="M7.500 1L10 6L15 6.500L11 10L12 15L7.500 12.500L3 15L4 10L0 6.500L5 6z" fill="#f09020"/></svg></div>
<div class="tk" style="left:650px;top:852px;width:113px">制作规范 (Ver...<svg class="ti" width="15" height="15"><path d="M2 2H13M2 5H13M2 8H13M2 11H13M2 14H13" stroke="#3060c8"/></svg></div>
<div class="tk" style="left:765px;top:852px;width:113px;padding-left:24px;letter-spacing:-.3px">AS7LJ00GA0制...<svg class="ti" width="15" height="15"><rect x="4" y="1" width="10" height="13" fill="#fff" stroke="#555"/><rect x="1" y="3" width="8" height="8" fill="#208040"/></svg></div>
<div class="tk" style="left:880px;top:852px;width:113px;padding-left:24px;letter-spacing:-.3px">AS7LJ00GA0-...<svg class="ti" width="15" height="15"><rect x="4" y="1" width="10" height="13" fill="#fff" stroke="#555"/><rect x="1" y="3" width="8" height="8" fill="#208040"/></svg></div>
<div class="tk" style="left:995px;top:852px;width:53px;padding-left:24px">get.ex<svg class="ti" width="15" height="15"><circle cx="7.500" cy="7.500" r="6.500" fill="#3090b0"/><circle cx="7.500" cy="7.500" r="3" fill="#d8e040"/></svg></div>
<div class="tk t2" style="left:116px;width:134px">Graphic Editor 9.07...<svg class="ti" width="15" height="15"><rect x=".5" y=".5" width="14" height="14" fill="#fff" stroke="#334"/><rect width="15" height="3" fill="#223"/><path d="M4 6l7 7M11 6l-7 7" stroke="#7a0" stroke-width="2"/></svg></div>
<div class="tk t2" style="left:252px;width:132px">Dialog Box<svg class="ti" width="15" height="15"><rect x=".5" y=".5" width="14" height="14" fill="#fff" stroke="#334"/><rect width="15" height="3" fill="#223"/><path d="M4 6l7 7M11 6l-7 7" stroke="#7a0" stroke-width="2"/></svg></div>
<div class="tk t2" style="left:387px;width:132px;background:#ecebe6;border-color:#555;border-right-color:#fff;border-bottom:0;font-weight:bold;color:#111">Drill Tool Manager<svg class="ti" width="15" height="15"><rect x=".5" y=".5" width="14" height="14" fill="#fff" stroke="#334"/><rect width="15" height="3" fill="#223"/><path d="M4 6l7 7M11 6l-7 7" stroke="#7a0" stroke-width="2"/></svg></div>
<div class="tk t2" style="left:522px;width:134px">as7lj00ga0-阻抗设...<svg class="ti" width="15" height="15"><rect x="3" y="1" width="11" height="13" fill="#fff" stroke="#555"/><rect x="1" y="3" width="9" height="8" fill="#2050b8"/></svg></div>
<div class="tk t2" style="left:659px;width:133px">201412100201192...<svg class="ti" width="15" height="15"><rect x="3" y="1" width="11" height="13" fill="#fff" stroke="#555"/><rect x="1" y="3" width="9" height="8" fill="#2050b8"/></svg></div>
<div class="tk t2" style="left:795px;width:134px">as7lj00ga0.txt - 写...<svg class="ti" width="15" height="15"><rect x="2" y="1" width="11" height="13" fill="#e0ecf8" stroke="#5070a0"/><path d="M4 5H11M4 8H11M4 11H9" stroke="#5070a0"/></svg></div>
<div class="tk t2" style="left:932px;width:116px">CAM_Guide v2.57<svg class="ti" width="16" height="15"><ellipse cx="8" cy="8" rx="7" ry="5" fill="#40a0a0"/><circle cx="8" cy="8" r="2.500" fill="#e8e040"/></svg></div>
<!-- tray -->
<div style="left:1350px;top:853px;width:2px;height:42px;background:#999;border-right:1px solid #fff"></div>
<svg style="left:1360px;top:855px" width="18" height="38"><rect x="1" y="7" width="15" height="9" rx="2" fill="#c0c0c0" stroke="#777"/><path d="M10 7C10 4 14 4 14 1" stroke="#888" fill="none"/><rect x="4" y="24" width="6" height="5" fill="none" stroke="#000"/><rect x="7" y="22" width="6" height="4" fill="#d4d0c8" stroke="#000"/><path d="M5 33H11L8 36z" fill="#000"/></svg>
<div style="left:1381px;top:853px;width:219px;height:42px;border-top:1px solid #808080;border-left:1px solid #808080"></div>
<div style="left:1537px;top:858px;font:13px/16px 'Liberation Sans',sans-serif;color:#111;letter-spacing:0;font-weight:normal">23:00</div>
<div style="left:1523px;top:877px;font:13px/16px 'Liberation Sans',sans-serif;color:#111;letter-spacing:0;font-weight:normal">2016/10/21</div>
<svg style="left:1385px;top:855px" width="215" height="38" fill="none">
<path d="M2 5L5 2L8 5M2 9L5 6L8 9" stroke="#000"/>
<path d="M19 3L33 18M33 3L19 18" stroke="#801080" stroke-width="3"/>
<rect x="43" y="2" width="13" height="15" rx="3" fill="#3088d8"/><rect x="50" y="15" width="10" height="5" fill="#40b040"/>
<ellipse cx="74" cy="10" rx="6" ry="9" fill="#14307a"/><path d="M71 6L77 13L74 16V4L77 7L71 13" stroke="#fff"/>
<path d="M91 3L104 3L103 13L97 18L92 13z" fill="#40a840"/><path d="M98 6L94 11H98L96 15" stroke="#f0e040"/>
<path d="M116 8A6 6 0 0 1 124 4L126 8L122 7L120 14H128L128 19H116z" fill="#e02020"/><rect x="122" y="12" width="9" height="7" fill="#f0d060"/>
<path d="M18 36L27 22L31 36z" fill="#e01818"/><path d="M27 30L36 36H24z" fill="#30b040"/>
<path d="M42 27L59 21L56 26H44zM40 32L52 28L47 37H42z" fill="#1890e8"/>
<rect x="68" y="25" width="12" height="12" fill="#d0d0d0" stroke="#444"/><rect x="64" y="21" width="4" height="10" fill="#fff" stroke="#444"/>
<path d="M92 22H103V30L99 37H94V30z" fill="#fff" stroke="#444"/><path d="M95 22V26M100 22V26" stroke="#444"/>
<path d="M117 27H120L125 22V37L120 32H117z" fill="#ddd" stroke="#666"/><path d="M128 25Q131 29 128 34M131 23Q135 29 131 36" stroke="#888"/>
<rect x="196" y="11" width="18" height="12" fill="#2870c8"/>
</svg>
</body></html>
